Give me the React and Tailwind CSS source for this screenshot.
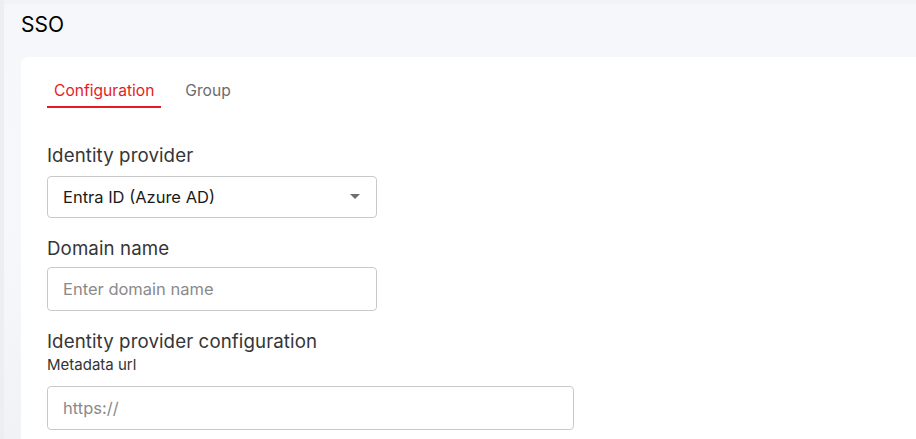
export default function App() {
  return (
    <div className="w-[916px] h-[439px] overflow-hidden bg-[#f0f2f6] font-['Inter',sans-serif] flex">
      <div className="w-[4px] shrink-0 bg-[#eceef2]" />
      <div className="flex-1 flex flex-col bg-gradient-to-b from-[#f6f7fa] via-[#f7f8fb] to-[#f0f2f6]">
        <div className="h-[57px] pl-[17px] pt-[8px] border-t-[4px] border-[#f2f3f6]">
          <h1 className="text-[21px] leading-[25px] text-black">SSO</h1>
        </div>
        <div className="flex-1 ml-[17px] bg-white rounded-tl-[8px] pl-[26px] pt-[24px]">
          <div className="flex items-end gap-[17px]">
            <div className="px-[7px] pb-[5px] border-b-2 border-[#e51b24] text-[15.6px] leading-[20px] text-[#e51b24]">
              Configuration
            </div>
            <div className="px-[7px] pb-[7px] text-[15.6px] leading-[20px] text-[#6b6b6b]">Group</div>
          </div>
          <div className="mt-[37px] text-[18.7px] tracking-[0.005em] leading-[22px] text-[#363636]">Identity provider</div>
          <div className="mt-[9px] w-[330px] h-[42px] border border-[#c9c9c9] rounded-[4px] flex items-center justify-between pl-[15px] pr-[16px]">
            <span className="text-[16.5px] text-[#1a1a1a]">Entra ID (Azure AD)</span>
            <svg width="10" height="6" viewBox="0 0 10 6"><path d="M0 0h10L5 5z" fill="#6e6e6e" /></svg>
          </div>
          <div className="mt-[20px] text-[18.7px] tracking-[0.005em] leading-[22px] text-[#363636]">Domain name</div>
          <div className="mt-[7px] w-[330px] h-[44px] border border-[#c9c9c9] rounded-[4px] flex items-center pl-[15px]">
            <span className="text-[16.5px] text-[#8a8a8a]">Enter domain name</span>
          </div>
          <div className="mt-[20px] text-[18.7px] tracking-[0.005em] leading-[22px] text-[#363636]">Identity provider configuration</div>
          <div className="mt-[3px] text-[15px] leading-[18px] text-[#333]">Metadata url</div>
          <div className="mt-[12px] w-[527px] h-[44px] border border-[#c9c9c9] rounded-[4px] flex items-center pl-[15px]">
            <span className="text-[16.5px] text-[#8a8a8a]">https://</span>
          </div>
        </div>
      </div>
    </div>
  );
}
